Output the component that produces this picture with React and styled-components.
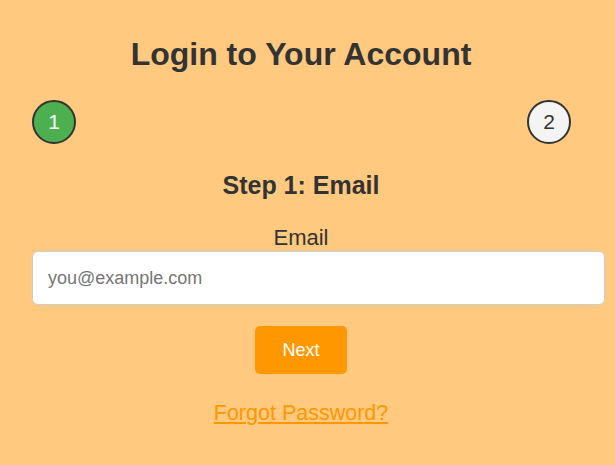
import React, { useState } from "react";
import styled, { createGlobalStyle } from "styled-components";

const GlobalStyle = createGlobalStyle`
  html, body {
    margin: 0;
    padding: 0;
    background: #ffc97f;
  }
  body {
    font-family: "Liberation Sans", Arial, sans-serif;
    color: #333;
  }
`;

const Page = styled.div`
  width: 615px;
  min-height: 465px;
  box-sizing: border-box;
  padding: 36px 0 0 32px;
  background: #ffc97f;
`;

const Card = styled.div`
  width: 538px;
  display: flex;
  flex-direction: column;
  align-items: center;
`;

const Title = styled.h1`
  margin: 0;
  font-size: 32px;
  font-weight: bold;
  line-height: 37px;
  color: #333;
  text-align: center;
`;

const Steps = styled.div`
  width: 539px;
  align-self: flex-start;
  display: flex;
  justify-content: space-between;
  margin-top: 27px;
`;

const StepCircle = styled.div`
  width: 44px;
  height: 44px;
  box-sizing: border-box;
  border-radius: 50%;
  border: 2px solid #333;
  background: ${(p) => (p.$active ? "#4caf50" : "#f4f4f4")};
  color: ${(p) => (p.$active ? "#fff" : "#333")};
  display: flex;
  align-items: center;
  justify-content: center;
  font-size: 21px;
`;

const StepTitle = styled.h2`
  margin: 27px 0 0;
  font-size: 25px;
  line-height: 29px;
  font-weight: bold;
  color: #333;
`;

const Label = styled.label`
  display: block;
  margin-top: 25px;
  font-size: 22px;
  line-height: 26px;
  color: #333;
  text-align: center;
`;

const Input = styled.input`
  align-self: flex-start;
  width: 573px;
  height: 54px;
  box-sizing: border-box;
  margin-top: 0;
  padding: 0 15px;
  border: 1px solid #ccc;
  border-radius: 6px;
  background: #fff;
  font-family: "Liberation Sans", Arial, sans-serif;
  font-size: 18px;
  color: #333;
  outline: none;

  &::placeholder {
    color: #757575;
  }
`;

const NextButton = styled.button`
  margin-top: 21px;
  width: 92px;
  height: 48px;
  border: none;
  border-radius: 5px;
  background: #ff9800;
  color: #fff;
  font-family: "Liberation Sans", Arial, sans-serif;
  font-size: 18px;
  cursor: pointer;
`;

const ForgotLink = styled.a`
  margin-top: 27px;
  font-size: 21.5px;
  line-height: 25px;
  color: #ff9800;
  text-decoration: underline;
  cursor: pointer;
`;

const App = () => {
  const [email, setEmail] = useState("");

  return (
    <>
      <GlobalStyle />
      <Page>
        <Card>
          <Title>Login to Your Account</Title>
          <Steps>
            <StepCircle $active>1</StepCircle>
            <StepCircle>2</StepCircle>
          </Steps>
          <StepTitle>Step 1: Email</StepTitle>
          <Label htmlFor="email">Email</Label>
          <Input
            id="email"
            type="email"
            placeholder="you@example.com"
            value={email}
            onChange={(e) => setEmail(e.target.value)}
          />
          <NextButton>Next</NextButton>
          <ForgotLink href="#">Forgot Password?</ForgotLink>
        </Card>
      </Page>
    </>
  );
};

export default App;
